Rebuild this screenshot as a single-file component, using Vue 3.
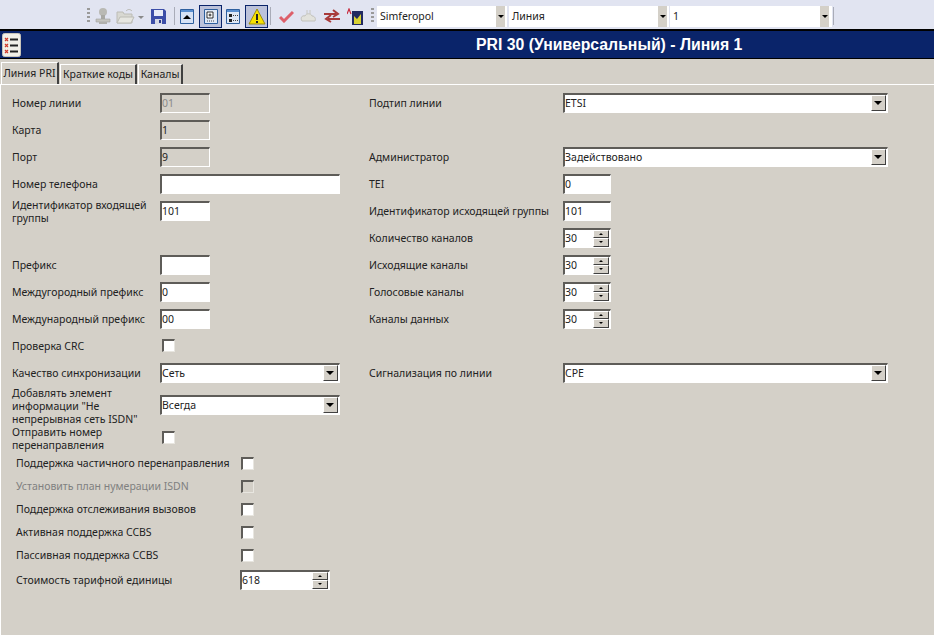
<script setup>
const leftRows = [
  { label: 'Номер линии', type: 'readonly', value: '01', muted: true },
  { label: 'Карта', type: 'readonly', value: '1' },
  { label: 'Порт', type: 'readonly', value: '9' },
  { label: 'Номер телефона', type: 'wide', value: '' },
  { label: 'Идентификатор входящей группы', type: 'text', value: '101' },
  { type: 'blank' },
  { label: 'Префикс', type: 'text', value: '' },
  { label: 'Междугородный префикс', type: 'text', value: '0' },
  { label: 'Международный префикс', type: 'text', value: '00' },
  { label: 'Проверка CRC', type: 'check' },
  { label: 'Качество синхронизации', type: 'combo', value: 'Сеть' },
  { label: 'Добавлять элемент информации "Не непрерывная сеть ISDN"', type: 'combo', value: 'Всегда', size: 'tall' },
  { label: 'Отправить номер перенаправления', type: 'check', size: 'mid' }
]

const optionRows = [
  { label: 'Поддержка частичного перенаправления' },
  { label: 'Установить план нумерации ISDN', disabled: true },
  { label: 'Поддержка отслеживания вызовов' },
  { label: 'Активная поддержка CCBS' },
  { label: 'Пассивная поддержка CCBS' }
]

const rightRows = [
  { label: 'Подтип линии', type: 'combo', value: 'ETSI' },
  { type: 'blank' },
  { label: 'Администратор', type: 'combo', value: 'Задействовано' },
  { label: 'TEI', type: 'text', value: '0' },
  { label: 'Идентификатор исходящей группы', type: 'text', value: '101' },
  { label: 'Количество каналов', type: 'spin', value: '30' },
  { label: 'Исходящие каналы', type: 'spin', value: '30' },
  { label: 'Голосовые каналы', type: 'spin', value: '30' },
  { label: 'Каналы данных', type: 'spin', value: '30' },
  { type: 'blank' },
  { label: 'Сигнализация по линии', type: 'combo', value: 'CPE' }
]

const tabs = ['Линия PRI', 'Краткие коды', 'Каналы']
</script>

<template>
  <div class="window">
    <div class="toolbar">
      <span class="gripper"></span>
      <svg class="tool" width="16" height="18" viewBox="0 0 16 18">
        <circle cx="8" cy="5" r="4" fill="#b9b9b4" />
        <path d="M6 8h4v4H6z" fill="#a8a8a3" />
        <path d="M1 12h14v3H1z" fill="#c4c4bf" stroke="#a3a3a0" stroke-width=".6" />
        <path d="M4 15h8v2H4z" fill="#b0b0ac" />
      </svg>
      <svg class="tool folder" width="19" height="16" viewBox="0 0 19 16">
        <path d="M1 4h6l1 2h8v9H1z" fill="#d8d8d2" stroke="#bcbcb6" />
        <path d="M4 9h14l-3 6H1z" fill="#e6e6e1" stroke="#bcbcb6" />
        <path d="M10 3c2-2 4-2 6 0" fill="none" stroke="#b8b8b2" />
      </svg>
      <span class="tiny-arrow"></span>
      <svg class="tool save" width="15" height="15" viewBox="0 0 15 15">
        <path d="M0 0h13l2 2v13H0z" fill="#3c4ea8" />
        <path d="M3 1h9v6H3z" fill="#e8ecf8" />
        <path d="M4 10h7v5H4z" fill="#d5d8e4" />
        <path d="M8 11h2v3H8z" fill="#2b3a8a" />
      </svg>
      <span class="sep"></span>
      <svg class="tool view" width="14" height="15" viewBox="0 0 14 15">
        <path d="M.5.5h13v14H.5z" fill="#d6e2f5" stroke="#2e5f9e" />
        <path d="M1 1h12v2H1z" fill="#5a8fd0" />
        <path d="M7 6l4 4H3z" fill="#000" />
      </svg>
      <span class="pressed">
        <svg width="14" height="15" viewBox="0 0 14 15">
          <path d="M.5.5h13v14H.5z" fill="#dfe8f6" stroke="#2e5f9e" />
          <path d="M3 3h6v6H3z" fill="#fff" stroke="#000" stroke-width=".8" />
          <path d="M6 4.500v3M4.500 6h3" stroke="#000" stroke-width=".8" />
          <path d="M3 12h8" stroke="#444" stroke-dasharray="1 1" />
        </svg>
      </span>
      <svg class="tool list" width="14" height="15" viewBox="0 0 14 15">
        <path d="M.5.5h13v14H.5z" fill="#dfe8f6" stroke="#2e5f9e" />
        <path d="M1 1h12v2H1z" fill="#5a8fd0" />
        <path d="M3 5h3v3H3zM3 10h3v3H3z" fill="#222" />
        <path d="M7 6.500h5M7 11.500h5" stroke="#444" stroke-dasharray="1 1" />
      </svg>
      <span class="pressed warn">
        <svg width="18" height="17" viewBox="0 0 18 17">
          <path d="M9 1l8 15H1z" fill="#f7e200" stroke="#9a8c10" />
          <path d="M8 6h2v6H8zM8 13h2v2H8z" fill="#222" />
        </svg>
      </span>
      <span class="sep short"></span>
      <svg class="tool check" width="15" height="13" viewBox="0 0 15 13">
        <path d="M1 7l4 4 9-9" fill="none" stroke="#dd5f6a" stroke-width="3" />
      </svg>
      <svg class="tool cloud" width="17" height="14" viewBox="0 0 17 14">
        <path d="M2 12c-2-3 0-6 3-5 1-3 6-3 7 0 3 0 4 3 3 5z" fill="#e2e2dc" stroke="#c2c2bc" />
        <path d="M7 1v4M10 1v4" stroke="#c8c8c2" />
      </svg>
      <svg class="tool swap" width="18" height="14" viewBox="0 0 18 14">
        <path d="M1 5h12M10 1l5 4-5 3" fill="none" stroke="#a83a3a" stroke-width="2" />
        <path d="M17 10H5M8 6l-5 4 5 3" fill="none" stroke="#a83a3a" stroke-width="2" />
      </svg>
      <svg class="tool abc" width="16" height="17" viewBox="0 0 16 17">
        <path d="M5 3h11v14H5z" fill="#222a60" />
        <path d="M7 8l3 3 4-5v10H7z" fill="#d9d233" />
        <path d="M0 6l2-5 2 5" fill="none" stroke="#c8283c" stroke-width="1.200" />
      </svg>
      <span class="gripper end"></span>
      <div class="tb-combo first"><span>Simferopol</span><i class="tb-arrow"></i></div>
      <div class="tb-combo second"><span>Линия</span><i class="tb-arrow"></i></div>
      <div class="tb-combo third"><span>1</span><i class="tb-arrow"></i></div>
      <span class="sep last"></span>
    </div>

    <header class="titlebar">
      <svg class="title-icon" width="19" height="24" viewBox="0 0 19 24">
        <rect x=".5" y=".5" width="18" height="23" rx="2" fill="#f1efe8" stroke="#c9c5ba" />
        <path d="M3 5l3 3M6 5L3 8M3 11l3 3M6 11l-3 3M3 17l3 3M6 17l-3 3" stroke="#d0392b" stroke-width="1.200" />
        <path d="M8 6.500h8M8 12.500h8M8 18.500h8" stroke="#222" stroke-width="1.800" />
      </svg>
      <h1>PRI 30 (Универсальный) - Линия 1</h1>
    </header>

    <nav class="tabs">
      <button v-for="(tab, i) in tabs" :key="tab" class="tab" :class="{ active: i === 0 }">{{ tab }}</button>
    </nav>

    <main class="page">
      <section class="col left">
        <div v-for="(row, i) in leftRows" :key="i" class="row" :class="row.size">
          <template v-if="row.type !== 'blank'">
            <label class="lbl">{{ row.label }}</label>
            <div v-if="row.type === 'combo'" class="field combo"><span>{{ row.value }}</span><i class="drop"></i></div>
            <div v-else-if="row.type === 'check'" class="checkbox"></div>
            <div v-else class="field" :class="[row.type, { muted: row.muted }]">{{ row.value }}</div>
          </template>
        </div>
        <div v-for="opt in optionRows" :key="opt.label" class="row option" :class="{ off: opt.disabled }">
          <label class="lbl">{{ opt.label }}</label>
          <div class="checkbox"></div>
        </div>
        <div class="row option cost">
          <label class="lbl">Стоимость тарифной единицы</label>
          <div class="field spin cost-spin">618<span class="spinner"><i class="up"></i><i class="down"></i></span></div>
        </div>
      </section>

      <section class="col right">
        <div v-for="(row, i) in rightRows" :key="i" class="row">
          <template v-if="row.type !== 'blank'">
            <label class="lbl">{{ row.label }}</label>
            <div v-if="row.type === 'combo'" class="field combo"><span>{{ row.value }}</span><i class="drop"></i></div>
            <div v-else-if="row.type === 'spin'" class="field spin">{{ row.value }}<span class="spinner"><i class="up"></i><i class="down"></i></span></div>
            <div v-else class="field text">{{ row.value }}</div>
          </template>
        </div>
      </section>
    </main>
  </div>
</template>

<style>
html, body {
  margin: 0;
  background: #d4d0c8;
}
</style>

<style scoped>
.window {
  width: 934px;
  height: 635px;
  overflow: hidden;
  background: #d4d0c8;
  font-family: "Noto Sans", sans-serif;
  font-size: 10.5px;
  color: #222;
  display: flex;
  flex-direction: column;
}

/* toolbar */
.toolbar {
  height: 29px;
  flex: none;
  box-sizing: border-box;
  background: #e1e4f1;
  display: flex;
  align-items: center;
  padding: 3px 0 0 87px;
}
.gripper {
  width: 3px;
  height: 16px;
  margin-right: 5px;
  background: repeating-linear-gradient(to bottom, #9a9a9a 0 2px, transparent 2px 4px);
}
.gripper.end {
  margin: 0 3px 0 8px;
}
.tool {
  flex: none;
}
.folder {
  margin-left: 5px;
}
.tiny-arrow {
  width: 0;
  height: 0;
  margin: 2px 7px 0 3px;
  border: 3px solid transparent;
  border-top: 3px solid #8a8a8a;
  border-bottom: 0;
}
.sep {
  width: 1px;
  height: 18px;
  background: #a9acb8;
  margin: 0 5px 0 8px;
}
.sep.short {
  margin: 0 8px 0 2px;
}
.sep.last {
  margin: 0 0 0 1px;
}
.view {
  margin-right: 5px;
}
.pressed {
  width: 23px;
  height: 23px;
  box-sizing: border-box;
  border: 1px solid #0a246a;
  background: #bcc2da;
  display: flex;
  align-items: center;
  justify-content: center;
  margin-right: 4px;
}
.warn {
  margin-right: 0;
}
.list {
  margin-right: 5px;
}
.check,
.cloud,
.swap {
  margin-right: 6px;
}
.tb-combo {
  height: 21px;
  margin-right: 2px;
  background: #fff;
  box-sizing: border-box;
  display: flex;
  align-items: center;
  padding-left: 3px;
  position: relative;
}
.first { width: 130px; }
.second { width: 160px; margin-right: 1px; }
.third { width: 162px; margin-right: 0; }
.tb-arrow {
  position: absolute;
  right: 2px;
  top: 0;
  width: 9px;
  height: 21px;
  background: #d4d0c8;
}
.third .tb-arrow {
  right: 3px;
}
.tb-arrow::after {
  content: "";
  position: absolute;
  left: 2px;
  top: 9px;
  border: 3px solid transparent;
  border-top: 3px solid #000;
  border-bottom: 0;
}

/* title */
.titlebar {
  height: 30px;
  flex: none;
  box-sizing: border-box;
  background: #0a246a;
  border-top: 2px solid #000;
  border-bottom: 1px solid #000;
  display: flex;
  align-items: center;
  padding-left: 2px;
}
h1 {
  margin: 0 0 0 455px;
  font: bold 15.8px "Liberation Sans", sans-serif;
  color: #fff;
}

/* tabs */
.tabs {
  height: 25px;
  flex: none;
  display: flex;
  align-items: flex-end;
  padding-left: 1px;
  gap: 1px;
}
.tab {
  height: 20px;
  box-sizing: border-box;
  padding: 0 0 2px;
  background: #d4d0c8;
  border: 0;
  border-top: 1px solid #fff;
  border-left: 1px solid #fff;
  border-right: 2px solid #404040;
  font: inherit;
  color: #222;
}
.tab:nth-child(1) { width: 58px; height: 22px; }
.tab:nth-child(2) { width: 77px; }
.tab:nth-child(3) { width: 45px; }

/* form */
.page {
  flex: 1;
  display: flex;
  border-top: 1px solid #fff;
  border-left: 1px solid #fff;
  padding-top: 5px;
  box-sizing: border-box;
}
.col.left {
  width: 368px;
  flex: none;
  box-sizing: border-box;
  padding-left: 11px;
}
.col.right {
  flex: 1;
}
.row {
  height: 27px;
  display: flex;
  align-items: center;
}
.row.tall { height: 38px; }
.row.mid { height: 26px; margin-top: 1px; }
.lbl {
  line-height: 13px;
  flex: none;
  width: 148px;
}
.right .lbl {
  width: 194px;
}
.option {
  height: 23px;
  padding-left: 4px;
}
.option .lbl {
  width: 225px;
}
.option.off .lbl {
  color: #808080;
}
.option.cost {
  height: 27px;
}
.option.cost .lbl {
  width: 224px;
}
.field {
  box-sizing: border-box;
  height: 20px;
  margin-bottom: 2px;
  background: #fff;
  border-top: 2px solid #5e5c58;
  border-left: 2px solid #5e5c58;
  border-bottom: 1px solid #fff;
  border-right: 1px solid #fff;
  padding: 0;
  line-height: 17px;
  display: flex;
  align-items: center;
  position: relative;
}
.field.readonly {
  width: 50px;
  background: #d4d0c8;
}
.field.muted {
  color: #8a8a8a;
}
.field.text {
  width: 50px;
}
.right .field.text,
.right .field.spin {
  width: 48px;
}
.field.wide,
.left .combo {
  width: 180px;
}
.right .combo {
  width: 325px;
}
.drop {
  position: absolute;
  right: 1px;
  top: 0;
  width: 15px;
  height: 16px;
  box-sizing: border-box;
  background: #d4d0c8;
  border: 1px solid;
  border-color: #fff #404040 #404040 #fff;
}
.drop::after {
  content: "";
  position: absolute;
  left: 2px;
  top: 5px;
  border: 4px solid transparent;
  border-top: 4px solid #000;
  border-bottom: 0;
}
.checkbox {
  box-sizing: border-box;
  width: 13px;
  height: 13px;
  margin-left: 2px;
  margin-bottom: 2px;
  background: #fff;
  border-top: 2px solid #5e5c58;
  border-left: 2px solid #5e5c58;
  border-bottom: 1px solid #e8e6e0;
  border-right: 1px solid #e8e6e0;
}
.mid .checkbox {
  margin-bottom: 4px;
}
.option .checkbox {
  margin: 0;
}
.option.off .checkbox {
  background: #d4d0c8;
}
.field.cost-spin {
  width: 90px;
}
.spinner {
  position: absolute;
  right: 1px;
  top: 0;
  width: 16px;
  height: 17px;
  display: flex;
  flex-direction: column;
}
.spinner i {
  flex: 1;
  position: relative;
  background: #d4d0c8;
  border: 1px solid;
  border-color: #fff #404040 #404040 #fff;
}
.spinner i::after {
  content: "";
  position: absolute;
  left: 5px;
  top: 2px;
  border: 2px solid transparent;
}
.spinner .up::after {
  border-bottom: 2px solid #000;
  border-top: 0;
}
.spinner .down::after {
  border-top: 2px solid #000;
  border-bottom: 0;
}
</style>
